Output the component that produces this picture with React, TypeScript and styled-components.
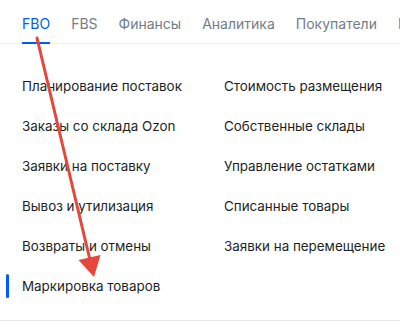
import React from 'react';
import styled, { createGlobalStyle } from 'styled-components';

const GlobalStyle = createGlobalStyle`
  html, body {
    margin: 0;
    padding: 0;
    background: #ffffff;
  }
  body {
    font-family: Inter, "Noto Sans", Roboto, sans-serif;
    -webkit-font-smoothing: antialiased;
  }
`;

const Page = styled.section`
  position: relative;
  width: 400px;
  height: 321px;
  overflow: hidden;
  background: #ffffff;
`;

const TabBar = styled.nav`
  display: flex;
  gap: 21px;
  padding-left: 22px;
  height: 44px;
  box-sizing: border-box;
  border-bottom: 1px solid #eceef2;
  white-space: nowrap;
`;

const Tab = styled.div<{ $active?: boolean }>`
  position: relative;
  padding: 14px 0 10px;
  font-size: 14px;
  line-height: 20px;
  font-weight: 400;
  color: ${(p) => (p.$active ? '#005bff' : '#737d89')};

  &::after {
    content: '';
    display: ${(p) => (p.$active ? 'block' : 'none')};
    position: absolute;
    left: 0;
    right: 0;
    bottom: -1px;
    height: 2px;
    background: #005bff;
  }
`;

const Menu = styled.div`
  display: grid;
  grid-template-columns: 202px 1fr;
  padding: 22px 0 14px 22px;
  border-bottom: 1px solid #e6e8ec;
`;

const Column = styled.ul`
  list-style: none;
  margin: 0;
  padding: 0;
  display: flex;
  flex-direction: column;
`;

const Item = styled.li<{ $active?: boolean }>`
  position: relative;
  padding: 10px 0;
  font-size: 13.4px;
  line-height: 20px;
  color: #1c1f24;
  white-space: nowrap;

  &::before {
    content: '';
    display: ${(p) => (p.$active ? 'block' : 'none')};
    position: absolute;
    left: -16px;
    top: 8px;
    width: 3px;
    height: 24px;
    border-radius: 2px;
    background: #005bff;
  }
`;

const Arrow = styled.svg`
  position: absolute;
  left: 0;
  top: 0;
  pointer-events: none;
`;

const tabs = ['FBO', 'FBS', 'Финансы', 'Аналитика', 'Покупатели', 'Продвижение'];

const left = [
  'Планирование поставок',
  'Заказы со склада Ozon',
  'Заявки на поставку',
  'Вывоз и утилизация',
  'Возвраты и отмены',
  'Маркировка товаров',
];

const right = [
  'Стоимость размещения',
  'Собственные склады',
  'Управление остатками',
  'Списанные товары',
  'Заявки на перемещение',
];

export default function App() {
  return (
    <Page>
      <GlobalStyle />
      <TabBar>
        {tabs.map((t, i) => (
          <Tab key={t} $active={i === 0}>
            {t}
          </Tab>
        ))}
      </TabBar>
      <Menu>
        <Column>
          {left.map((t) => (
            <Item key={t} $active={t === 'Маркировка товаров'}>
              {t}
            </Item>
          ))}
        </Column>
        <Column>
          {right.map((t) => (
            <Item key={t}>{t}</Item>
          ))}
        </Column>
      </Menu>
      <Arrow width="400" height="321" viewBox="0 0 400 321">
        <line x1="37" y1="38" x2="90" y2="260" stroke="#e5473b" strokeWidth="3" strokeLinecap="round" />
        <polygon points="78.5,260 100.5,255 94,277" fill="#e5473b" />
      </Arrow>
    </Page>
  );
}
